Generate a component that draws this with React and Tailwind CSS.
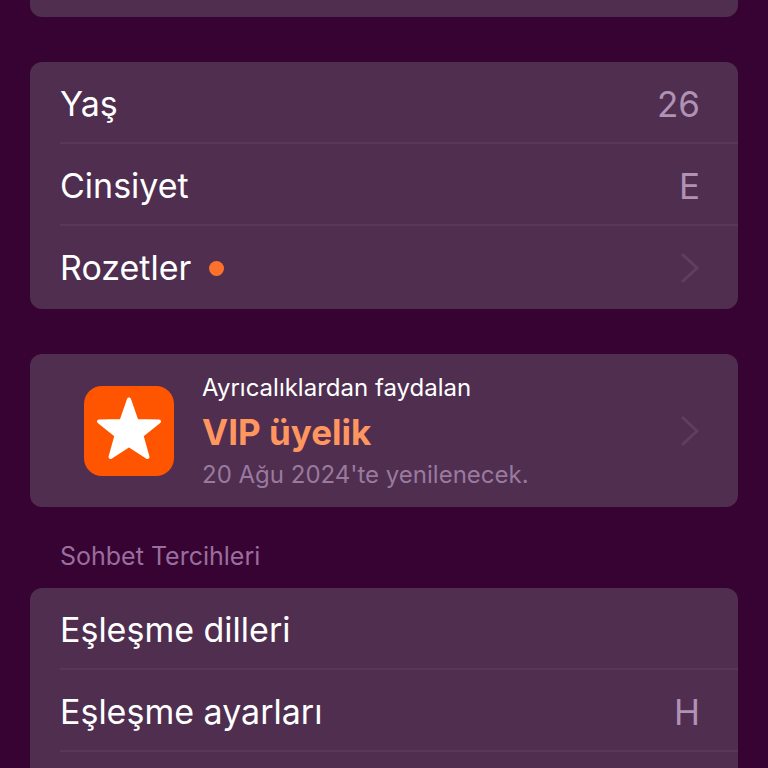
import { useState } from "react";

const profileRows = [
  { label: "Yaş", value: "26" },
  { label: "Cinsiyet", value: "E" },
  { label: "Rozetler", hasBadge: true, hasArrow: true },
];

const chatRows = [
  { label: "Eşleşme dilleri" },
  { label: "Eşleşme ayarları", value: "H" },
];

const Chevron = () => (
  <svg viewBox="0 0 20 32" className="h-8 w-5 shrink-0" fill="none" stroke="#603e63" strokeWidth="3" aria-hidden="true">
    <path d="M2 2 L17 16 L2 30" />
  </svg>
);

const StarIcon = () => (
  <svg viewBox="0 0 90 90" className="size-[90px] shrink-0" aria-hidden="true">
    <rect width="90" height="90" rx="18" fill="#ff5500" />
    <path
      d="M45 13.5 L52.5 35 L75 35.5 L57.5 49.5 L63.5 71 L45 59 L26.5 71 L32.5 49.5 L15 35.5 L37.5 35 Z"
      fill="#fff"
      stroke="#fff"
      strokeWidth="4"
      strokeLinejoin="round"
    />
  </svg>
);

const Row = ({ label, value, hasBadge, hasArrow, selected, onSelect }) => (
  <li className="group pl-[30px]">
    <button
      onClick={() => onSelect(label)}
      aria-pressed={selected}
      className="flex w-full items-center justify-between border-b-2 border-[#583759] pt-5 pr-[38px] pb-4 text-left text-[34px] leading-[44px] group-last:border-transparent"
    >
      <span className="flex items-center gap-[18px] text-white">
        {label}
        {hasBadge && <span className="size-[15px] rounded-full bg-[#fe712a]" />}
      </span>
      {value && <span className="text-[35px] text-[#b092b5]">{value}</span>}
      {hasArrow && <Chevron />}
    </button>
  </li>
);

const App = () => {
  const [selected, setSelected] = useState(null);

  return (
    <main className="flex h-screen flex-col overflow-hidden bg-[#360333] px-[30px] font-['Inter',sans-serif]">
      <div className="h-[17px] shrink-0 rounded-b-xl bg-[#4f2e50]" />

      <ul className="mt-[45px] shrink-0 rounded-xl bg-[#4f2e50] pb-px">
        {profileRows.map((row) => (
          <Row key={row.label} {...row} selected={selected === row.label} onSelect={setSelected} />
        ))}
      </ul>

      <button
        onClick={() => setSelected("VIP")}
        className="mt-[45px] flex shrink-0 items-center rounded-xl bg-[#4f2e50] pt-4 pr-[38px] pb-[15px] pl-[54px] text-left"
      >
        <StarIcon />
        <span className="ml-7 flex flex-1 flex-col">
          <span className="text-[24px] leading-9 text-white">Ayrıcalıklardan faydalan</span>
          <span className="text-[35px] leading-[52px] font-bold text-[#ff965f]">VIP üyelik</span>
          <span className="text-[24px] leading-[34px] text-[#997a9e]">20 Ağu 2024'te yenilenecek.</span>
        </span>
        <Chevron />
      </button>

      <h2 className="mt-[31px] mb-[14px] shrink-0 pl-[30px] text-[25px] leading-9 text-[#9a6e9d]">
        Sohbet Tercihleri
      </h2>

      <ul className="flex-1 rounded-t-xl bg-[#4f2e50]">
        {chatRows.map((row) => (
          <Row key={row.label} {...row} selected={selected === row.label} onSelect={setSelected} />
        ))}
        <li className="h-20" />
      </ul>
    </main>
  );
};

export default App;
